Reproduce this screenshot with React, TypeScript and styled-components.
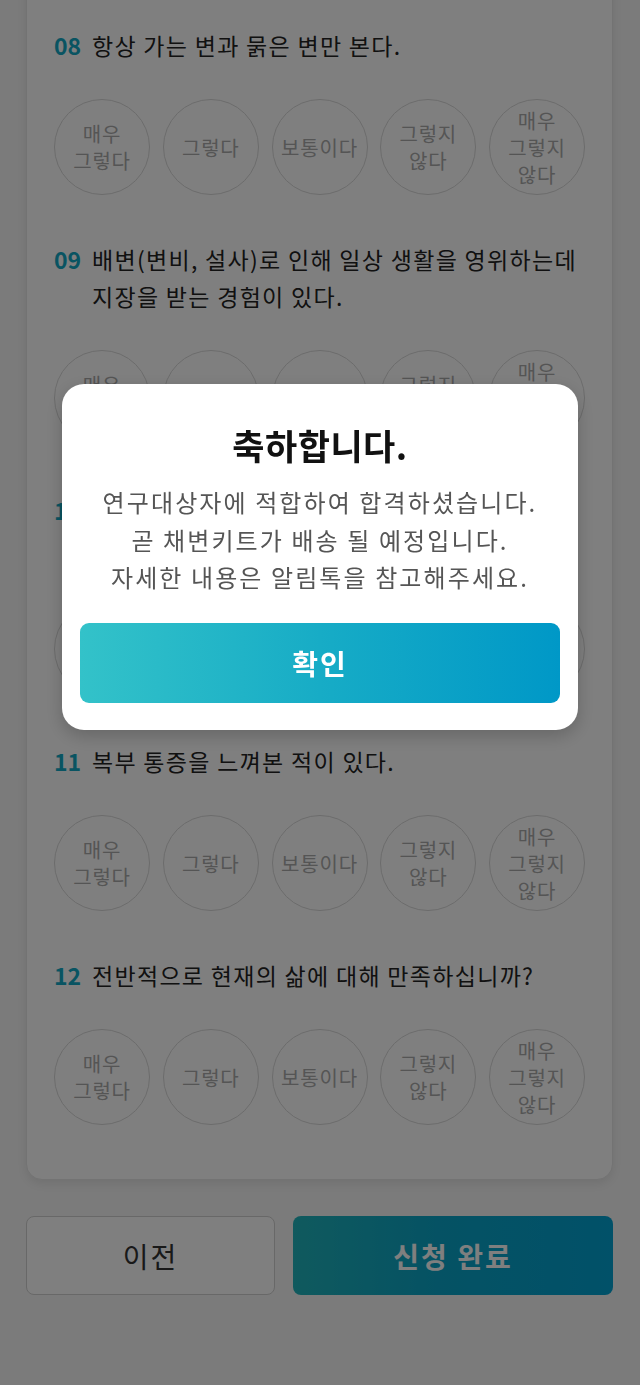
import React from "react";
import styled, { createGlobalStyle } from "styled-components";

const GlobalStyle = createGlobalStyle`
  html, body {
    margin: 0;
    padding: 0;
    background: #f6f6f6;
    font-family: "Noto Sans CJK KR", "Noto Sans", sans-serif;
    color: #222;
  }
  * {
    box-sizing: border-box;
  }
`;

const Page = styled.div`
  min-height: 1385px;
  padding: 0 27px 90px 26px;
  overflow: hidden;
`;

const SurveyCard = styled.div`
  margin-top: -30px;
  background: #fff;
  border: 1px solid #e6e6e6;
  border-radius: 16px;
  box-shadow: 0 4px 10px rgba(0, 0, 0, 0.08);
  padding: 56px 27px 54px 27px;
`;

const Question = styled.div`
  & + & {
    margin-top: 46px;
  }
`;

const QuestionTitle = styled.div`
  display: flex;
  gap: 10px;
  font-size: 23px;
  line-height: 37px;
  letter-spacing: 1.3px;
  margin-bottom: 35px;
`;

const QuestionNo = styled.span`
  flex: none;
  width: 28px;
  color: #12a8c4;
  font-weight: 700;
  letter-spacing: 0;
`;

const QuestionText = styled.span`
  flex: 1;
`;

const OptionRow = styled.div`
  display: grid;
  grid-template-columns: repeat(5, 96px);
  justify-content: space-between;
`;

const Option = styled.button`
  width: 96px;
  height: 96px;
  border-radius: 50%;
  border: 1px solid #d8d8d8;
  background: #fff;
  color: #aaa;
  font-family: inherit;
  font-size: 20px;
  line-height: 27px;
  letter-spacing: 0.8px;
  padding: 0;
  display: flex;
  align-items: center;
  justify-content: center;
  text-align: center;
  white-space: pre-line;
`;

const ButtonRow = styled.div`
  display: flex;
  gap: 18px;
  margin-top: 36px;
`;

const PrevButton = styled.button`
  flex: 0 0 249px;
  height: 79px;
  border: 1px solid #d0d0d0;
  border-radius: 8px;
  background: #fff;
  color: #333;
  font-family: inherit;
  font-size: 28px;
  letter-spacing: 2px;
`;

const SubmitButton = styled.button`
  flex: 1;
  height: 79px;
  border: none;
  border-radius: 8px;
  background: linear-gradient(90deg, #20b4bc 0%, #0aa5c8 45%, #02a2d2 100%);
  color: #fff;
  font-family: inherit;
  font-size: 28px;
  font-weight: 700;
  letter-spacing: 2px;
`;

const Overlay = styled.div`
  position: fixed;
  inset: 0;
  background: rgba(0, 0, 0, 0.5);
  display: flex;
  justify-content: center;
  align-items: flex-start;
  padding-top: 384px;
`;

const Modal = styled.div`
  width: 516px;
  background: #fff;
  border-radius: 22px;
  padding: 39px 18px 27px;
  text-align: center;
  box-shadow: 0 6px 18px rgba(0, 0, 0, 0.2);
`;

const ModalTitle = styled.h2`
  margin: 0 0 16px;
  font-size: 35px;
  line-height: 44px;
  font-weight: 700;
  color: #111;
  letter-spacing: 0.5px;
`;

const ModalBody = styled.p`
  margin: 0 0 27px;
  font-size: 24px;
  line-height: 37.5px;
  color: #555;
  letter-spacing: 2.1px;
`;

const ConfirmButton = styled.button`
  width: 100%;
  height: 80px;
  border: none;
  border-radius: 9px;
  background: linear-gradient(90deg, #33c2c9 0%, #17acc6 50%, #0098c7 100%);
  color: #fff;
  font-family: inherit;
  font-size: 28px;
  font-weight: 700;
  letter-spacing: 2px;
`;

const options = ["매우\n그렇다", "그렇다", "보통이다", "그렇지\n않다", "매우\n그렇지\n않다"];

const questions = [
  { no: "08", text: "항상 가는 변과 묽은 변만 본다." },
  { no: "09", text: "배변(변비, 설사)로 인해 일상 생활을 영위하는데 지장을 받는 경험이 있다." },
  { no: "10", text: "배변 후에도 잔변감이 남아 있어 화장실에 다시 가고 싶은 적이 있다." },
  { no: "11", text: "복부 통증을 느껴본 적이 있다." },
  { no: "12", text: "전반적으로 현재의 삶에 대해 만족하십니까?" },
];

export default function App() {
  return (
    <>
      <GlobalStyle />
      <Page>
        <SurveyCard>
          {questions.map((q) => (
            <Question key={q.no}>
              <QuestionTitle>
                <QuestionNo>{q.no}</QuestionNo>
                <QuestionText>{q.text}</QuestionText>
              </QuestionTitle>
              <OptionRow>
                {options.map((o) => (
                  <Option key={o}>{o}</Option>
                ))}
              </OptionRow>
            </Question>
          ))}
        </SurveyCard>
        <ButtonRow>
          <PrevButton>이전</PrevButton>
          <SubmitButton>신청 완료</SubmitButton>
        </ButtonRow>
      </Page>
      <Overlay>
        <Modal>
          <ModalTitle>축하합니다.</ModalTitle>
          <ModalBody>
            연구대상자에 적합하여 합격하셨습니다.
            <br />곧 채변키트가 배송 될 예정입니다.
            <br />
            자세한 내용은 알림톡을 참고해주세요.
          </ModalBody>
          <ConfirmButton>확인</ConfirmButton>
        </Modal>
      </Overlay>
    </>
  );
}
